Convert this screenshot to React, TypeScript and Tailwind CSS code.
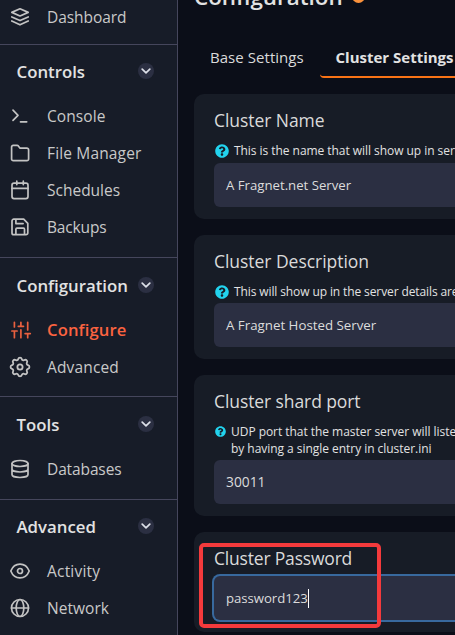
import React from "react";
import type { ReactNode } from "react";
import { FaQuestionCircle } from "react-icons/fa";

function Icon({ children }: { children: ReactNode }) {
  return (
    <svg
      className="h-5 w-5 shrink-0 overflow-visible"
      viewBox="0 0 20 20"
      fill="none"
      stroke="currentColor"
      strokeWidth="1.7"
      strokeLinecap="round"
      strokeLinejoin="round"
    >
      {children}
    </svg>
  );
}

const icons = {
  stack: (
    <Icon>
      <path d="M10 1.8 18.2 5.4 10 9 1.8 5.4Z M1.8 9.9 10 13.6l8.2-3.7 M1.8 14 10 17.8l8.2-3.8" />
    </Icon>
  ),
  terminal: (
    <Icon>
      <path d="M3 4.2 8 9.3 3 14.4 M10.5 15.8h6.2" />
    </Icon>
  ),
  folder: (
    <Icon>
      <path d="M3.2 2.4h3.9a1.6 1.6 0 0 1 1.2.5l1.8 2.3h6.8a1.7 1.7 0 0 1 1.7 1.7v9a1.7 1.7 0 0 1-1.7 1.7H3.3a1.7 1.7 0 0 1-1.7-1.7V4a1.6 1.6 0 0 1 1.6-1.6Z" />
    </Icon>
  ),
  calendar: (
    <Icon>
      <rect x="2" y="3.2" width="16" height="15.4" rx="2" />
      <path d="M2 8.4h16 M6.8 1.2v3.4 M13.3 1.2v3.4" />
    </Icon>
  ),
  floppy: (
    <Icon>
      <path d="M3.8 2.2h9.9l4.1 4.1v9.6a1.8 1.8 0 0 1-1.8 1.8H3.8A1.8 1.8 0 0 1 2 15.9V4a1.8 1.8 0 0 1 1.8-1.8Z M5.9 17.7v-5.5a1 1 0 0 1 1-1h6.6a1 1 0 0 1 1 1v5.5 M5.9 2.2v4.4h7.2" />
    </Icon>
  ),
  sliders: (
    <Icon>
      <path d="M4.4 2.3V7 M1.9 11h5.2 M4.4 11v6.7 M10.9 2.3V6.3 M8.3 6.3h5.2 M10.9 9.8v7.9 M17.7 2.3v7.6 M15.1 13.6h5.2 M17.7 13.6v4.1" />
    </Icon>
  ),
  gear: (
    <Icon>
      <g transform="translate(-2.6 -2.6) scale(1.05)">
        <path d="M10.325 4.317c.426-1.756 2.924-1.756 3.35 0a1.724 1.724 0 0 0 2.573 1.066c1.543-.94 3.31.826 2.37 2.37a1.724 1.724 0 0 0 1.065 2.572c1.756.426 1.756 2.924 0 3.35a1.724 1.724 0 0 0-1.066 2.573c.94 1.543-.826 3.31-2.37 2.37a1.724 1.724 0 0 0-2.572 1.065c-.426 1.756-2.924 1.756-3.35 0a1.724 1.724 0 0 0-2.573-1.066c-1.543.94-3.31-.826-2.37-2.37a1.724 1.724 0 0 0-1.065-2.572c-1.756-.426-1.756-2.924 0-3.35a1.724 1.724 0 0 0 1.066-2.573c-.94-1.543.826-3.31 2.37-2.37 1 .608 2.296.07 2.572-1.065Z" />
        <circle cx="12" cy="12" r="2.5" />
      </g>
    </Icon>
  ),
  database: (
    <Icon>
      <ellipse cx="10" cy="4.5" rx="8" ry="3" />
      <path d="M2 4.5v11c0 1.7 3.6 3 8 3s8-1.3 8-3v-11 M2 10c0 1.7 3.6 3 8 3s8-1.3 8-3" />
    </Icon>
  ),
  eye: (
    <Icon>
      <path d="M.8 10C2.6 5.5 6 3.1 10 3.1S17.4 5.5 19.2 10C17.4 14.5 14 16.9 10 16.9S2.6 14.5.8 10Z" />
      <circle cx="10" cy="10" r="2.5" />
    </Icon>
  ),
  globe: (
    <Icon>
      <circle cx="10" cy="10" r="8.5" />
      <ellipse cx="10" cy="10" rx="3.8" ry="8.5" />
      <path d="M1.5 10h17" />
    </Icon>
  ),
};

type Item = { icon: ReactNode; label: string; className: string };

function NavItem({ icon, label, className }: Item) {
  return (
    <a className="flex h-[37px] items-center gap-[17px] pl-2.5">
      <span className={className.includes("font-semibold") ? "text-[#e9603f]" : "text-[#c3c3c3]"}>{icon}</span>
      <span className={`leading-6 ${className}`}>{label}</span>
    </a>
  );
}

function Section({ title, items, className, header }: { title: string; items: Item[]; className: string; header: string }) {
  return (
    <section className={`border-t border-[#45465c] ${className}`}>
      <div className={`flex items-center justify-between pl-[16.5px] pr-[23px] ${header}`}>
        <h2 className="text-[16.8px] font-semibold leading-6 text-[#e2e2e2]">{title}</h2>
        <span className="mb-px flex h-4 w-4 items-center justify-center rounded-full bg-[#2b2f42]">
          <svg className="h-2 w-2.5" viewBox="0 0 10 8" fill="none" stroke="#dcdfe8" strokeWidth="1.7" strokeLinecap="round" strokeLinejoin="round">
            <path d="M1.2 2.2 5 5.8l3.8-3.6" />
          </svg>
        </span>
      </div>
      {items.map((item) => (
        <NavItem key={item.label} {...item} />
      ))}
    </section>
  );
}

const plain = "text-[15.5px] text-[#c9c9c9]";

function Card({ title, children, titleClass }: { title: string; children: ReactNode; titleClass: string }) {
  return (
    <div className="rounded-[10px] bg-[#171c26] px-5 pb-3 pt-[13px]">
      <h3 className={`text-[17.5px] leading-[27px] text-[#dadada] ${titleClass}`}>{title}</h3>
      {children}
    </div>
  );
}

function Field({ value, className, caret }: { value: string; className: string; caret?: boolean }) {
  return (
    <div className={`flex h-11 items-center rounded-md bg-[#2b2f42] pl-3 text-[#dcdcdc] ${className}`}>
      <span>{value}</span>
      {caret && <span className="-mt-0.5 h-[19px] w-px bg-white" />}
    </div>
  );
}

export default function App() {
  return (
    <div className="relative flex h-[635px] w-[455px] overflow-hidden whitespace-nowrap bg-[#0b0e18] font-['Open_Sans','Noto_Sans',sans-serif]">
      <aside className="w-[178px] shrink-0 border-r border-[#45465c] bg-[#171c28]">
        <div className="-mt-0.5 h-[46px]">
          <NavItem icon={icons.stack} label="Dashboard" className={`${plain} tracking-[-0.06px]`} />
        </div>
        <Section
          title="Controls"
          className="h-[213px]"
          header="h-[52px] pt-px"
          items={[
            { icon: icons.terminal, label: "Console", className: `${plain} tracking-[0.08px]` },
            { icon: icons.folder, label: "File Manager", className: `${plain} tracking-[0.15px]` },
            { icon: icons.calendar, label: "Schedules", className: plain },
            { icon: icons.floppy, label: "Backups", className: `${plain} tracking-[-0.16px]` },
          ]}
        />
        <Section
          title="Configuration"
          className="h-[139px]"
          header="h-[53px] pt-0.5"
          items={[
            { icon: icons.sliders, label: "Configure", className: "text-[16.6px] font-semibold tracking-[0.13px] text-[#fb6340]" },
            { icon: icons.gear, label: "Advanced", className: `${plain} tracking-[0.15px]` },
          ]}
        />
        <Section
          title="Tools"
          className="h-[103px]"
          header="h-[53px] pt-0.5"
          items={[{ icon: icons.database, label: "Databases", className: `${plain} tracking-[-0.12px]` }]}
        />
        <Section
          title="Advanced"
          className=""
          header="h-[52px] pt-px"
          items={[
            { icon: icons.eye, label: "Activity", className: `${plain} tracking-[0.2px]` },
            { icon: icons.globe, label: "Network", className: `${plain} tracking-[0.05px]` },
          ]}
        />
      </aside>

      <main className="w-[277px] shrink-0 pl-4">
        <header className="-mt-[18px] flex h-14 items-start gap-[9px]">
          <h1 className="text-[22.4px] font-semibold leading-[30px] text-[#e2e2e2]">Configuration</h1>
          <span className="mt-2 h-[13px] w-[13px] rounded-full bg-[#fb923c]" />
        </header>
        <nav className="flex h-10 text-[15px] text-[#dadada]">
          <a className="flex w-[126px] shrink-0 items-center border-b-2 border-transparent pl-4 tracking-[0.05px]">Base Settings</a>
          <a className="flex w-[150px] shrink-0 items-center rounded-[4px] border-b-2 border-[#f97316] pl-[15.5px] font-bold text-[#e2e2e2]">
            Cluster Settings
          </a>
        </nav>
        <div className="mt-4 flex w-[440px] flex-col gap-4">
          <Card title="Cluster Name" titleClass="tracking-[-0.06px]">
            <p className="mb-1 mt-2 flex h-[17px] items-center gap-[5px] pl-px text-[12px] tracking-[-0.05px] text-[#e2e2e2]">
              <FaQuestionCircle className="h-3.5 w-3.5 text-[#22d3ee]" />
              This is the name that will show up in server lists
            </p>
            <Field value="A Fragnet.net Server" className="pt-0.5 text-[13.2px]" />
          </Card>
          <Card title="Cluster Description" titleClass="tracking-[-0.04px]">
            <p className="mb-[3px] mt-2 flex h-[17px] items-center gap-[5px] pl-px text-[12px] tracking-[-0.11px] text-[#e2e2e2]">
              <FaQuestionCircle className="h-3.5 w-3.5 text-[#22d3ee]" />
              This will show up in the server details area
            </p>
            <Field value="A Fragnet Hosted Server" className="pt-0.5 text-[13.3px]" />
          </Card>
          <Card title="Cluster shard port" titleClass="tracking-[-0.09px]">
            <p className="mb-[3px] mt-2 flex gap-[5px] pl-px text-[12px] leading-[17px] tracking-[-0.04px] text-[#e2e2e2]">
              <FaQuestionCircle className="mt-[3px] h-[11px] w-[11px] text-[#22d3ee]" />
              <span>
                UDP port that the master server will listen on
                <br />
                by having a single entry in cluster.ini
              </span>
            </p>
            <Field value="30011" className="text-[13.8px]" />
          </Card>
          <Card title="Cluster Password" titleClass="tracking-[-0.19px]">
            <Field value="password123" className="mt-1 pt-0.5 text-[13.2px] tracking-[-0.05px] ring-2 ring-[#38699e]" caret />
          </Card>
        </div>
      </main>

      <div className="absolute left-[199px] top-[543px] h-[85px] w-[182px] rounded-[5px] border-4 border-[#f43a3c]" />
    </div>
  );
}
